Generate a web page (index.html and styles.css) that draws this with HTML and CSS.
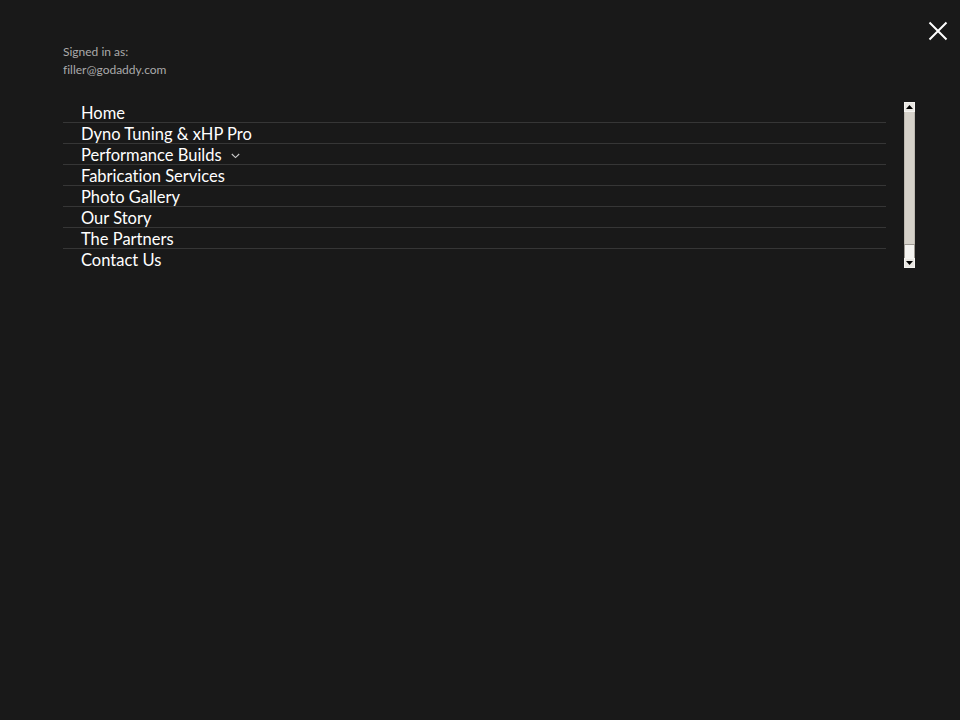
FILE: index.html
```html
<!DOCTYPE html>
<html lang="en">
<head>
  <meta charset="UTF-8">
  <title>Menu</title>
  <link rel="stylesheet" href="styles.css">
</head>
<body>
  <div class="drawer">
    <button class="close-btn" aria-label="Close">
      <svg width="20" height="20" viewBox="0 0 20 20">
        <path d="M1.5 1.5 L18.5 18.5 M18.5 1.5 L1.5 18.5" stroke="#fff" stroke-width="2" fill="none"/>
      </svg>
    </button>

    <div class="account">
      <div>Signed in as:</div>
      <div>filler@godaddy.com</div>
    </div>

    <div class="nav-wrap">
      <ul class="nav">
        <li><a href="#">Home</a></li>
        <li><a href="#">Dyno Tuning &amp; xHP Pro</a></li>
        <li><a href="#">Performance Builds</a><span class="caret"><svg width="9" height="6" viewBox="0 0 9 6"><path d="M0.8 1 L4.5 4.6 L8.2 1" stroke="#ccc" stroke-width="1.1" fill="none"/></svg></span></li>
        <li><a href="#">Fabrication Services</a></li>
        <li><a href="#">Photo Gallery</a></li>
        <li><a href="#">Our Story</a></li>
        <li><a href="#">The Partners</a></li>
        <li class="last"><a href="#">Contact Us</a></li>
      </ul>

      <div class="scrollbar">
        <div class="sb-btn"><svg width="7" height="4" viewBox="0 0 7 4"><path d="M0 4 L3.5 0 L7 4 Z" fill="#000"/></svg></div>
        <div class="sb-track">
          <div class="sb-thumb"></div>
        </div>
        <div class="sb-btn"><svg width="7" height="4" viewBox="0 0 7 4"><path d="M0 0 L3.5 4 L7 0 Z" fill="#000"/></svg></div>
      </div>
    </div>
  </div>
</body>
</html>
```

FILE: styles.css
```css
body {
  margin: 0;
  padding: 0;
  background: #191919;
  color: #fff;
  font-family: Lato, 'Open Sans', sans-serif;
  font-variant-ligatures: none;
}

.drawer {
  position: relative;
  min-height: 720px;
  padding: 43px 45px 0 63px;
  box-sizing: border-box;
}

.close-btn {
  position: absolute;
  top: 21px;
  right: 12px;
  background: none;
  border: none;
  padding: 0;
  cursor: pointer;
  line-height: 0;
}

.account {
  font-size: 12px;
  line-height: 18px;
  color: #aaa;
}

.nav-wrap {
  display: flex;
  align-items: flex-start;
  margin-top: 23px;
}

.nav {
  flex: 1;
  list-style: none;
  margin: 0;
  padding: 0;
}

.nav li {
  display: flex;
  align-items: center;
  height: 20px;
  padding-left: 18px;
  border-bottom: 1px solid #363636;
}

.nav li.last {
  border-bottom: none;
}

.nav a {
  color: #fff;
  text-decoration: none;
  font-size: 16.5px;
  line-height: 20px;
  margin-top: 2px;
}

.caret {
  margin-left: 9px;
  margin-top: 4px;
  line-height: 0;
}

.scrollbar {
  display: flex;
  flex-direction: column;
  width: 11px;
  height: 166px;
  margin-left: 18px;
  background: #d5d1c9;
}

.sb-btn {
  height: 10px;
  display: flex;
  align-items: center;
  justify-content: center;
  background: #e9e7e2;
  border: 1px solid #f4f3f0;
  box-sizing: border-box;
}

.sb-track {
  flex: 1;
  display: flex;
  flex-direction: column;
  justify-content: flex-end;
  border-left: 1px solid #bdb9b1;
  border-right: 1px solid #bdb9b1;
}

.sb-thumb {
  height: 13px;
  background: #f4f3f0;
  border: 1px solid #9e9a93;
  border-bottom: none;
  margin: 0 -1px;
}
```
